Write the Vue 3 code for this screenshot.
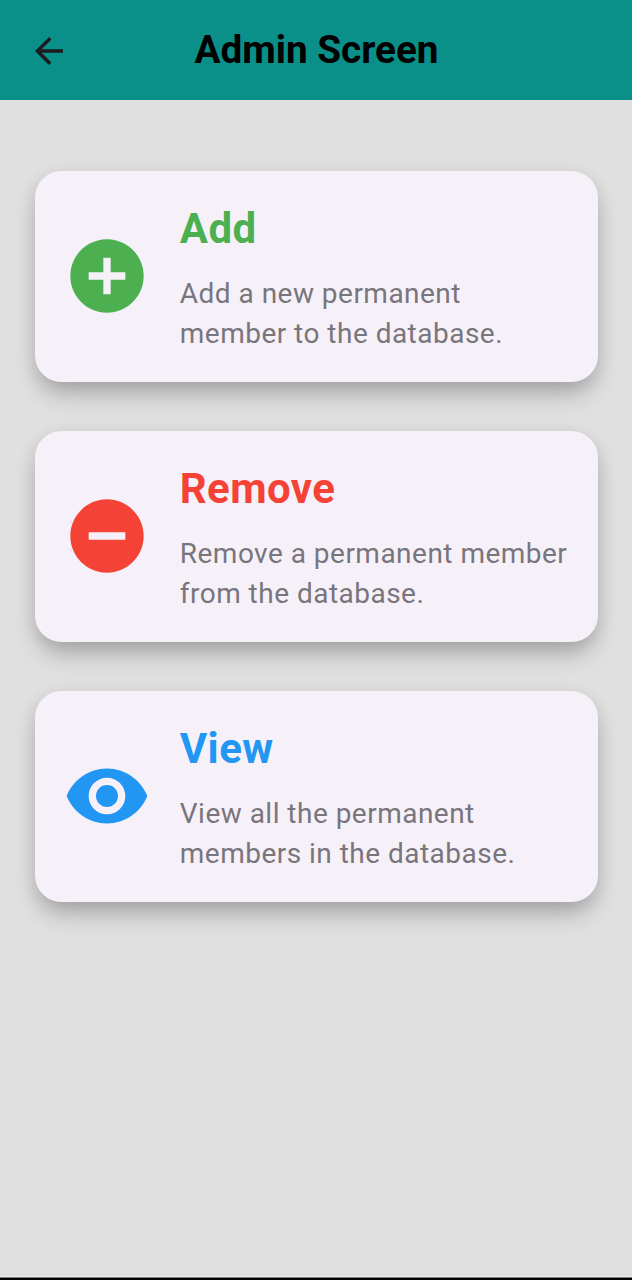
<script setup>
const cards = [
  {
    title: 'Add', color: '#4caf50', lines: ['Add a new permanent', 'member to the database.'],
    icon: 'M12 2C6.48 2 2 6.48 2 12s4.48 10 10 10 10-4.48 10-10S17.52 2 12 2zm5 11h-4v4h-2v-4H7v-2h4V7h2v4h4v2z'
  },
  {
    title: 'Remove', color: '#f44336', lines: ['Remove a permanent member', 'from the database.'],
    icon: 'M12 2C6.48 2 2 6.48 2 12s4.48 10 10 10 10-4.48 10-10S17.52 2 12 2zm5 11H7v-2h10v2z'
  },
  {
    title: 'View', color: '#2196f3', lines: ['View all the permanent', 'members in the database.'],
    icon: 'M12 4.5C7 4.5 2.73 7.61 1 12c1.73 4.39 6 7.5 11 7.5s9.27-3.11 11-7.5c-1.73-4.39-6-7.5-11-7.5zM12 17c-2.76 0-5-2.24-5-5s2.24-5 5-5 5 2.24 5 5-2.24 5-5 5zm0-8c-1.66 0-3 1.34-3 3s1.34 3 3 3 3-1.34 3-3-1.34-3-3-3z'
  }
]
</script>

<template>
  <div class="screen">
    <header class="bar">
      <svg class="back" viewBox="0 0 24 24"><path d="M20 11H7.83l5.59-5.59L12 4l-8 8 8 8 1.41-1.41L7.83 13H20v-2z" /></svg>
      <h1>Admin Screen</h1>
    </header>
    <main class="list">
      <section v-for="card in cards" :key="card.title" class="card" :style="{ '--accent': card.color }">
        <svg class="icon" viewBox="0 0 24 24"><path :d="card.icon" /></svg>
        <div class="body">
          <h2>{{ card.title }}</h2>
          <p><span v-for="line in card.lines" :key="line">{{ line }}</span></p>
        </div>
      </section>
    </main>
    <div class="nav-edge"></div>
  </div>
</template>

<style scoped>
.screen {
  width: 632px;
  height: 1280px;
  display: flex;
  flex-direction: column;
  background: #e0e0e0;
  font-family: Roboto, sans-serif;
  overflow: hidden;
}
.bar {
  height: 100px;
  flex: none;
  box-sizing: border-box;
  padding: 0 27px 0 28px;
  display: grid;
  grid-template-columns: 42px 1fr 42px;
  align-items: center;
  background: #0a8f89;
}
.back {
  width: 42px;
  height: 42px;
  fill: #1d1b20;
  margin-top: 2px;
}
h1 {
  margin: 0;
  text-align: center;
  font-size: 38.7px;
  line-height: 50px;
  font-weight: 700;
  color: #000;
}
.list {
  flex: 1;
  padding: 70.6px 34.2px 0 35.1px;
  display: flex;
  flex-direction: column;
  gap: 49.2px;
}
.card {
  height: 211px;
  box-sizing: border-box;
  padding: 28px;
  display: flex;
  align-items: center;
  gap: 28.7px;
  border-radius: 26.4px;
  background: #f6f1f9;
  box-shadow: 0 15px 24px -4px rgba(0, 0, 0, 0.24), 0 3px 18px rgba(0, 0, 0, 0.09);
}
.icon {
  flex: none;
  width: 88px;
  height: 88px;
  fill: var(--accent);
}
.body {
  height: 155px;
}
h2 {
  margin: 0;
  font-size: 42px;
  line-height: 60px;
  font-weight: 700;
  letter-spacing: 0.4px;
  color: var(--accent);
}
p {
  margin: 15px 0 0;
  font-size: 28px;
  line-height: 40.4px;
  letter-spacing: 0.48px;
  color: #79757c;
  white-space: nowrap;
}
p span {
  display: block;
}
.nav-edge {
  box-sizing: border-box;
  height: 4px;
  flex: none;
  border-top: 1px solid #efefef;
  background: linear-gradient(#777 1px, #000 1px);
}
</style>
